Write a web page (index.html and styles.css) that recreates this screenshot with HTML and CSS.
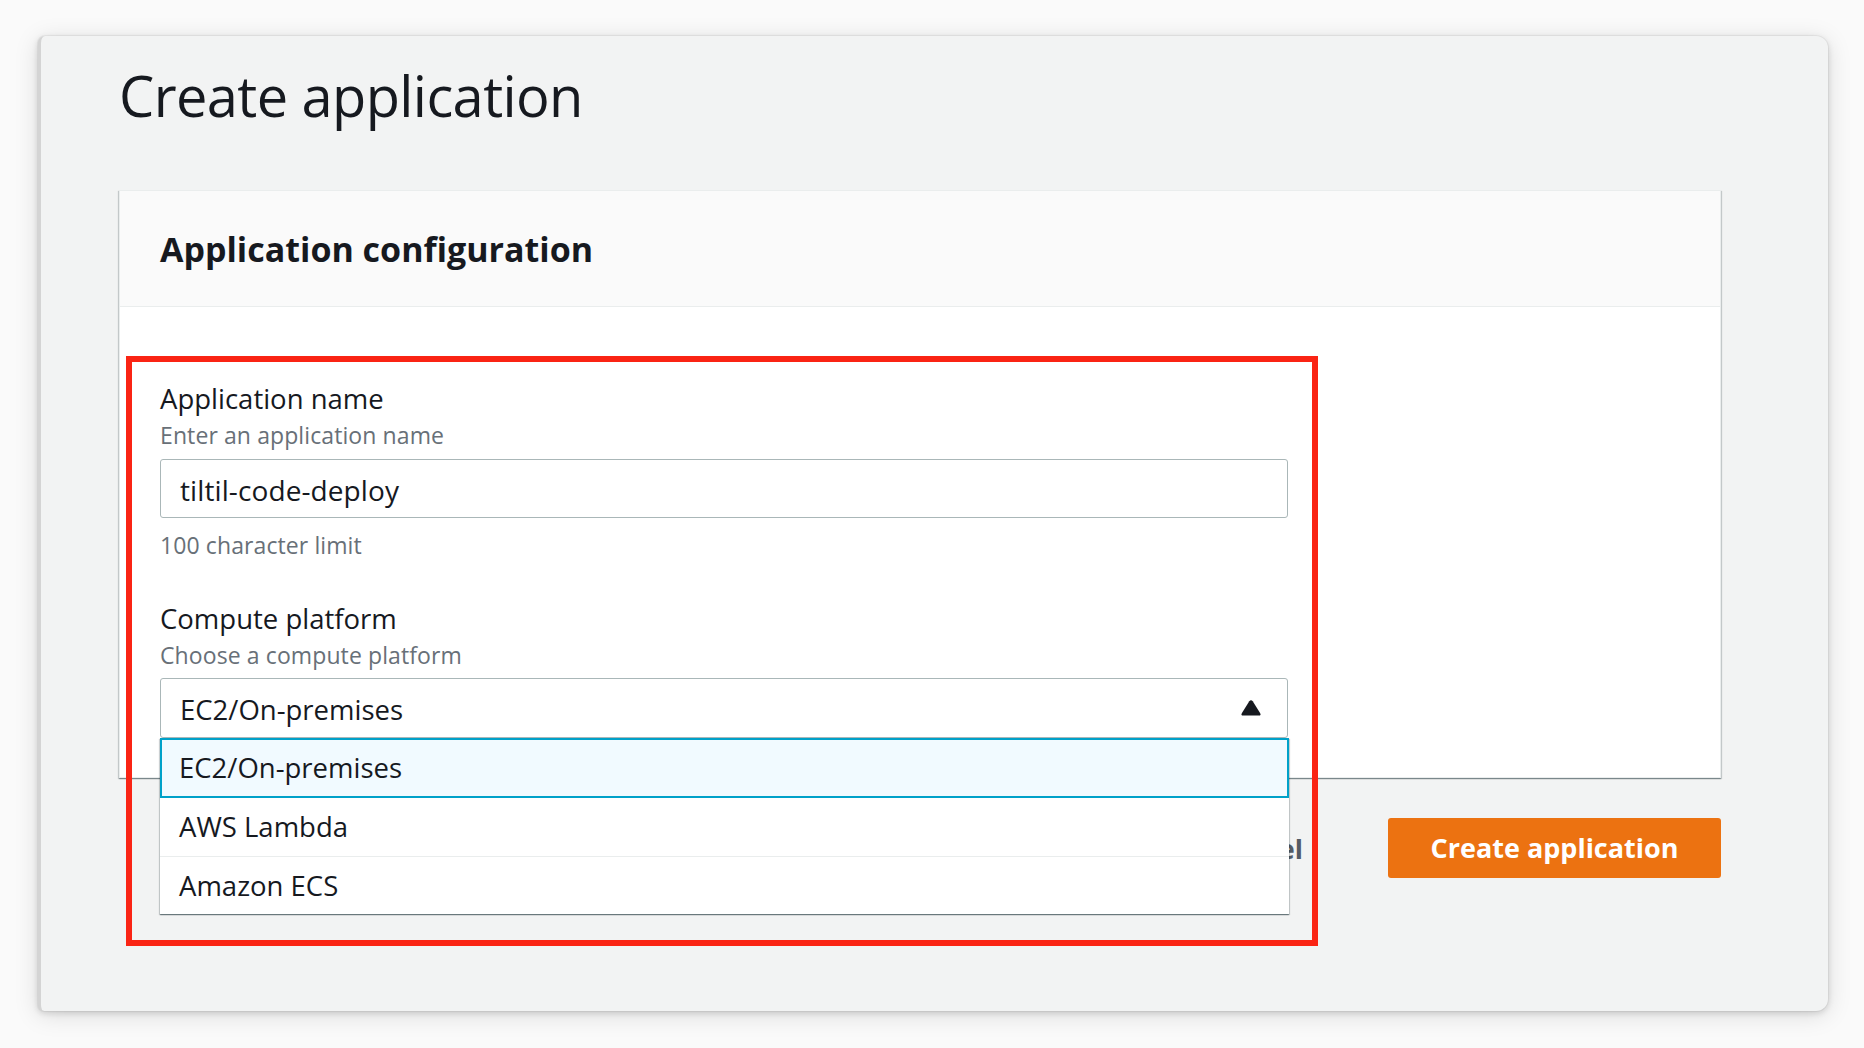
FILE: index.html
```html
<!DOCTYPE html>
<html lang="en">
<head>
<meta charset="utf-8">
<title>Create application</title>
<link rel="stylesheet" href="styles.css">
</head>
<body>
<div class="frame">
  <h1 class="page-title">Create application</h1>
  <section class="card">
    <header class="card-header">
      <h2 class="card-title">Application configuration</h2>
    </header>
    <div class="card-body">
      <div class="field">
        <div class="label">Application name</div>
        <div class="desc">Enter an application name</div>
        <div class="input">tiltil-code-deploy</div>
        <div class="hint">100 character limit</div>
      </div>
      <div class="field field-2">
        <div class="label">Compute platform</div>
        <div class="desc">Choose a compute platform</div>
        <div class="select-wrap">
          <div class="select">
            <span>EC2/On-premises</span>
            <svg class="caret" width="20" height="16" viewBox="0 0 20 16"><path d="M8.3 1.2 Q10 -0.8 11.7 1.2 L19.2 13.2 Q20.3 15.6 17.6 15.6 L2.4 15.6 Q-0.3 15.6 0.8 13.2 Z" fill="#16191f"/></svg>
          </div>
          <ul class="menu">
            <li class="option selected">EC2/On-premises</li>
            <li class="option">AWS Lambda</li>
            <li class="option">Amazon ECS</li>
          </ul>
        </div>
      </div>
    </div>
  </section>
  <div class="actions">
    <span class="cancel">Cancel</span>
    <span class="primary">Create application</span>
  </div>
  <div class="highlight"></div>
</div>
</body>
</html>
```
FILE: styles.css
```css
* { box-sizing: border-box; }
html, body { margin: 0; padding: 0; }
body {
  background: #fafafa;
  font-family: "Open Sans", "Noto Sans", sans-serif;
  color: #16191f;
  width: 1864px;
  height: 1048px;
  overflow: hidden;
}
.frame {
  position: relative;
  margin: 36px 0 0 38px;
  width: 1790px;
  height: 975px;
  background: #f2f3f3;
  border-radius: 7px 12px 12px 6px;
  border-left: 3px solid #d4d4d4;
  box-shadow: 0 0 0 1px rgba(0,0,0,0.04), 0 2px 6px rgba(0,0,0,0.14), 0 4px 24px rgba(0,0,0,0.13);
  padding: 27px 107px 0 78px;
}
.page-title {
  margin: 0;
  font-size: 56px;
  line-height: 64px;
  font-weight: 400;
  letter-spacing: -0.6px;
}
.card {
  margin-top: 63px;
  background: #fff;
  border: 1px solid #eaeded;
  box-shadow: 0 1px 1px 0 rgba(0,28,36,.3), 1px 1px 1px 0 rgba(0,28,36,.15), -1px 1px 1px 0 rgba(0,28,36,.15);
}
.card-header {
  height: 116px;
  background: #fafafa;
  border-bottom: 1px solid #eaeded;
  padding: 35px 0 0 40px;
}
.card-title {
  margin: 0;
  font-size: 34px;
  line-height: 46px;
  font-weight: 700;
  letter-spacing: 0;
}
.card-body {
  padding: 75px 432px 39px 40px;
}
.label {
  font-size: 27.5px;
  line-height: 34px;
}
.desc, .hint {
  font-size: 23px;
  line-height: 30px;
  color: #687078;
  letter-spacing: 0.1px;
}
.desc { margin-top: 4px; }
.input {
  margin-top: 9px;
  height: 59px;
  border: 1px solid #aab7b8;
  border-radius: 3px;
  padding: 5px 19px 0;
  font-size: 28px;
  line-height: 51px;
  letter-spacing: 0.1px;
}
.hint { margin-top: 12px; }
.field-2 { margin-top: 42px; }
.select-wrap { position: relative; margin-top: 8px; }
.select {
  height: 60px;
  border: 1px solid #aab7b8;
  border-radius: 3px;
  padding: 4px 26px 0 19px;
  font-size: 27.5px;
  line-height: 52px;
  display: flex;
  justify-content: space-between;
  align-items: center;
}
.caret { display: block; margin-top: -4px; }
.menu {
  position: absolute;
  left: 0;
  right: -1px;
  top: 100%;
  margin: 0;
  padding: 0;
  list-style: none;
  background: #fff;
  box-shadow: 0 1px 1px 0 rgba(0,28,36,.4), 1px 1px 1px 0 rgba(0,28,36,.15), -1px 1px 1px 0 rgba(0,28,36,.15);
  z-index: 2;
}
.option {
  height: 58px;
  padding: 0 19px;
  font-size: 27.5px;
  line-height: 57px;
  border-top: 1px solid #eaeded;
}
.option:first-child { border-top: none; }
.option.selected {
  background: #f1faff;
  border: 2px solid #00a1c9;
  height: 60px;
  padding: 0 17px;
  line-height: 56px;
}
.option.selected + .option { border-top: none; }
.actions {
  display: flex;
  justify-content: flex-end;
  align-items: center;
  margin-top: 40px;
}
.cancel {
  font-size: 27px;
  font-weight: 700;
  color: #545b64;
  margin-right: 85px;
}
.primary {
  height: 60px;
  width: 333px;
  background: #ec7211;
  color: #fff;
  border-radius: 3px;
  font-size: 27px;
  font-weight: 700;
  line-height: 60px;
  text-align: center;
}
.highlight {
  position: absolute;
  left: 85px;
  top: 320px;
  width: 1192px;
  height: 590px;
  border: 6px solid #fa2414;
  pointer-events: none;
  z-index: 3;
}
```
